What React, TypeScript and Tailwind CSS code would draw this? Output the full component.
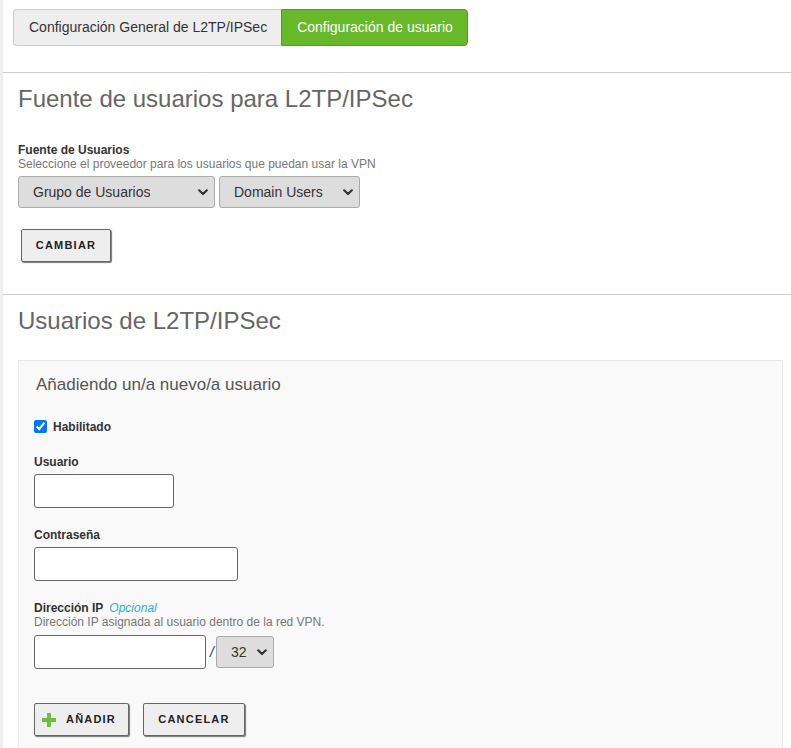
import React from "react";

function Chevron() {
  return (
    <svg width="10" height="7" viewBox="0 0 10 7" className="shrink-0">
      <path d="M1.2 1.3 L5 5 L8.8 1.3" fill="none" stroke="#333" strokeWidth="2.2" strokeLinecap="round" strokeLinejoin="round" />
    </svg>
  );
}

function Select({ label, className }: { label: string; className: string }) {
  return (
    <div
      className={
        "flex h-[32px] items-center justify-between rounded-[3px] border border-[#aaa] bg-[#ddd] pl-[14px] pr-[6px] text-[14px] text-[#333] " +
        className
      }
    >
      <span>{label}</span>
      <Chevron />
    </div>
  );
}

function Btn({ children, className }: { children: React.ReactNode; className: string }) {
  return (
    <button
      className={
        "flex h-[33px] items-center rounded-[2px] border border-[#666] bg-[#eee] text-[11px] font-bold tracking-[1.2px] text-[#222] shadow-[1px_1px_1px_#777] " +
        className
      }
    >
      {children}
    </button>
  );
}

export default function App() {
  return (
    <div className="min-h-[748px] border-l-[3px] border-[#eee] bg-white font-['Liberation_Sans',Arial,sans-serif] text-[#333]">
      {/* tabs */}
      <div className="flex pl-[10px] pt-[9px]">
        <div className="flex h-[37px] items-center rounded-l-[4px] border border-r-0 border-[#ccc] bg-[#eee] pl-[15px] pr-[14px] text-[14px] text-[#333]">
          Configuración General de L2TP/IPSec
        </div>
        <div className="flex h-[37px] items-center rounded-r-[4px] border border-[#4f9c23] bg-[#67b92a] pl-[15px] pr-[14px] text-[14px] text-white">
          Configuración de usuario
        </div>
      </div>

      <div className="mt-[26px] border-t border-[#ccc]" />

      <div className="pl-[15px]">
        <h2 className="mt-[13px] text-[24px] leading-[26px] text-[#666]">Fuente de usuarios para L2TP/IPSec</h2>
        <div className="mt-[31px] text-[12px] font-bold leading-[14px] text-[#333]">Fuente de Usuarios</div>
        <div className="text-[12px] leading-[14px] text-[#777]">Seleccione el proveedor para los usuarios que puedan usar la VPN</div>
        <div className="mt-[5px] flex gap-[4px]">
          <Select label="Grupo de Usuarios" className="w-[197px]" />
          <Select label="Domain Users" className="w-[141px]" />
        </div>
        <Btn className="ml-[3px] mt-[21px] w-[90px] justify-center">CAMBIAR</Btn>
      </div>

      <div className="mt-[32px] border-t border-[#ccc]" />

      <div className="pl-[15px] pr-[8px]">
        <h2 className="mt-[13px] text-[24px] leading-[26px] text-[#666]">Usuarios de L2TP/IPSec</h2>

        <div className="mt-[26px] min-h-[400px] border border-[#e8e8e8] bg-[#f9f9f9] pl-[15px] pt-[14px]">
          <div className="pl-[2px] text-[17px] leading-[20px] text-[#555]">Añadiendo un/a nuevo/a usuario</div>

          <div className="mt-[25px] flex h-[13px] items-center">
            <input type="checkbox" defaultChecked className="m-0 h-[13px] w-[13px] accent-[#0075ff]" />
            <span className="ml-[6px] text-[12px] font-bold leading-[14px] text-[#333]">Habilitado</span>
          </div>

          <div className="mt-[22px] text-[12px] font-bold leading-[14px] text-[#333]">Usuario</div>
          <input className="mt-[5px] block h-[34px] w-[140px] rounded-[3px] border border-[#666] bg-white" />

          <div className="mt-[20px] text-[12px] font-bold leading-[14px] text-[#333]">Contraseña</div>
          <input type="password" className="mt-[5px] block h-[34px] w-[204px] rounded-[3px] border border-[#666] bg-white" />

          <div className="mt-[20px] text-[12px] leading-[14px]">
            <span className="font-bold text-[#333]">Dirección IP</span>
            <span className="ml-[6px] italic text-[#2ab0d8]">Opcional</span>
          </div>
          <div className="text-[12px] leading-[14px] text-[#777]">Dirección IP asignada al usuario dentro de la red VPN.</div>
          <div className="mt-[6px] flex items-center">
            <input className="block h-[34px] w-[172px] rounded-[3px] border border-[#666] bg-white" />
            <span className="ml-[4px] mr-[2px] text-[14px] italic text-[#335]">/</span>
            <Select label="32" className="w-[58px]" />
          </div>

          <div className="mt-[34px] flex gap-[14px] pb-[12px]">
            <Btn className="w-[95px] pl-[7px]">
              <svg width="14" height="14" viewBox="0 0 14 14" className="mr-[10px]">
                <path d="M5 0h4v5h5v4H9v5H5V9H0V5h5z" fill="#6cbf3a" />
              </svg>
              AÑADIR
            </Btn>
            <Btn className="w-[102px] justify-center">CANCELAR</Btn>
          </div>
        </div>
      </div>
    </div>
  );
}
